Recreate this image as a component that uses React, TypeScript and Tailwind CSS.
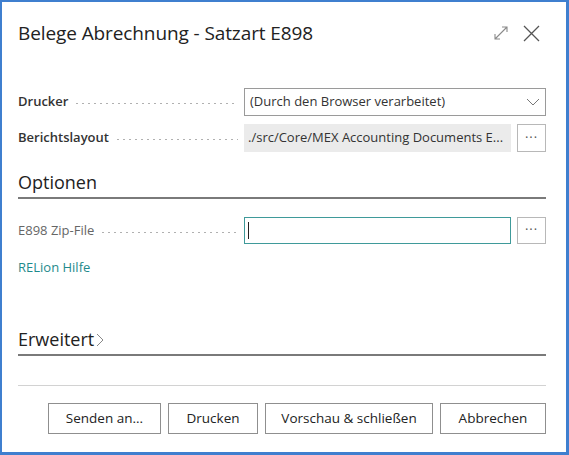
import React from "react";

const font = { fontFamily: '"Open Sans", "Noto Sans", sans-serif' };

const Leader = () => (
  <div className="flex-1 h-[3px] mt-[3px] mx-[6px] bg-[radial-gradient(circle,#b0b0b0_0.8px,transparent_1.1px)] bg-[length:6px_3px] bg-repeat-x" />
);

const DotsButton = () => (
  <button className="w-[29px] shrink-0 h-full border border-[#b8b8b8] bg-white flex items-center justify-center text-[#555] text-[13px] tracking-[1px] leading-none pb-[2px]">
    ···
  </button>
);

const Field = ({
  label,
  bold,
  children,
}: {
  label: string;
  bold?: boolean;
  children: React.ReactNode;
}) => (
  <div className="flex items-center h-full">
    <div className="w-[226px] shrink-0 flex items-center">
      <span
        className={
          bold
            ? "text-[13px] font-semibold text-[#333]"
            : "text-[13px] text-[#666]"
        }
      >
        {label}
      </span>
      <Leader />
    </div>
    <div className="flex-1 min-w-0 flex gap-[6px] h-full">{children}</div>
  </div>
);

const Heading = ({ children }: { children: React.ReactNode }) => (
  <div className="border-b-2 border-[#7a7a7a] pb-[3px] flex items-center">
    <span className="text-[18px] text-[#222] leading-[24px] flex items-center">{children}</span>
  </div>
);

export default function App() {
  const buttons = [
    { label: "Senden an...", w: "w-[113px]" },
    { label: "Drucken", w: "w-[90px]" },
    { label: "Vorschau & schließen", w: "w-[168px]" },
    { label: "Abbrechen", w: "w-[106px]" },
  ];

  return (
    <div
      style={font}
      className="w-[569px] h-[455px] bg-white border-l-2 border-t-2 border-r-[3px] border-b-[3px] border-[#3f7fcf] flex flex-col pl-[16px] pr-[20px]"
    >
      {/* header */}
      <div className="flex items-center h-[38px] mt-[12px]">
        <h1 className="flex-1 text-[19px] text-[#222] tracking-[-0.1px]">
          Belege Abrechnung - Satzart E898
        </h1>
        <svg width="16" height="16" viewBox="0 0 16 16" className="mr-[14px]" fill="none" stroke="#8a8a8a" strokeWidth="1.1">
          <path d="M2 14 L14 2 M9 2 H14 V7 M2 9 V14 H7" />
        </svg>
        <svg width="17" height="17" viewBox="0 0 17 17" className="mr-[6px]" fill="none" stroke="#555" strokeWidth="1.3">
          <path d="M1 1 L16 16 M16 1 L1 16" />
        </svg>
      </div>

      {/* fields */}
      <div className="mt-[36px] flex flex-col gap-[8px]">
        <div className="h-[28px]">
          <Field label="Drucker" bold>
            <div className="flex-1 border border-[#9a9a9a] flex items-center px-[5px] text-[13px] text-[#333]">
              <span className="flex-1">(Durch den Browser verarbeitet)</span>
              <svg width="14" height="8" viewBox="0 0 14 8" fill="none" stroke="#777" strokeWidth="1">
                <path d="M1 1 L7 7 L13 1" />
              </svg>
            </div>
          </Field>
        </div>
        <div className="h-[28px]">
          <Field label="Berichtslayout" bold>
            <div className="flex-1 min-w-0 bg-[#ebebeb] flex items-center px-[4px] text-[13px] text-[#333] whitespace-nowrap overflow-hidden">
              ./src/Core/MEX Accounting Documents E...
            </div>
            <DotsButton />
          </Field>
        </div>
      </div>

      <div className="mt-[18px]">
        <Heading>Optionen</Heading>
      </div>

      <div className="mt-[18px] h-[27px]">
        <Field label="E898 Zip-File">
          <div className="flex-1 border-[1.5px] border-[#3f9a9a] flex items-center px-[3px]">
            <div className="w-[1px] h-[17px] bg-[#222]" />
          </div>
          <DotsButton />
        </Field>
      </div>

      <div className="mt-[14px] text-[13px] text-[#1f8a8c]">RELion Hilfe</div>

      <div className="mt-[49px]">
        <Heading>
          Erweitert
          <svg width="8" height="14" viewBox="0 0 8 14" className="ml-[2px] mt-[2px]" fill="none" stroke="#888" strokeWidth="1">
            <path d="M1 1 L7 7 L1 13" />
          </svg>
        </Heading>
      </div>

      <div className="mt-[29px] border-t border-[#d2d2d2]" />

      {/* footer buttons */}
      <div className="mt-[17px] flex justify-end gap-[7px]">
        {buttons.map((b) => (
          <button
            key={b.label}
            className={`${b.w} h-[31px] border border-[#8f8f8f] bg-white text-[13.5px] text-[#222]`}
          >
            {b.label}
          </button>
        ))}
      </div>
    </div>
  );
}
